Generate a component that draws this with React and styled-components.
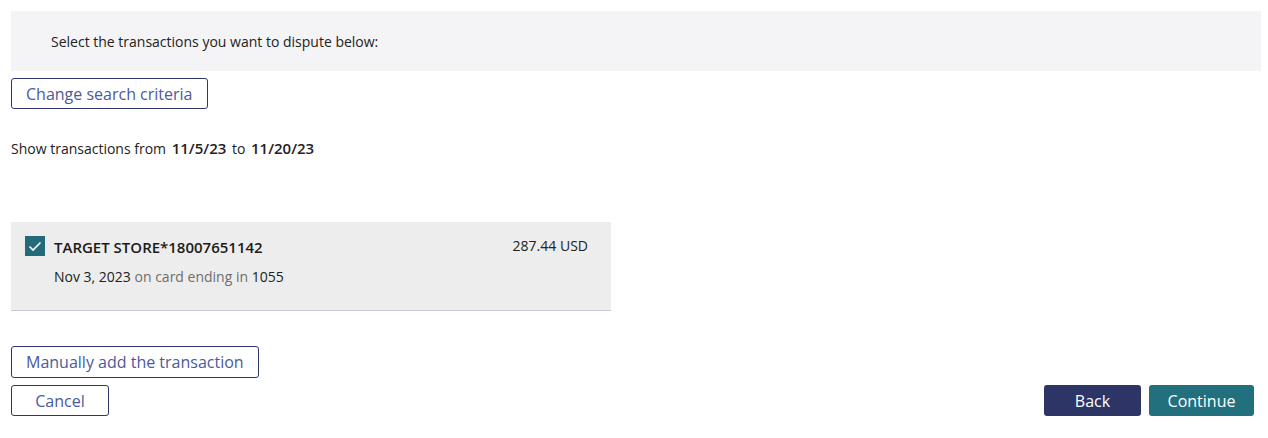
import styled, { createGlobalStyle } from 'styled-components'

const Global = createGlobalStyle`
    body {
        margin: 0;
        font-family: "Open Sans", "Noto Sans", sans-serif;
        color: #1a1a1a;
        background: #fff;
    }
`

const Page = styled.div`
    padding: 11px 7px 0 11px;
`

const Banner = styled.div`
    background: #f4f4f6;
    height: 60px;
    display: flex;
    align-items: center;
    padding-left: 40px;
    font-size: 14px;
    color: #222;
`

const OutlineButton = styled.button`
    font-family: inherit;
    font-size: 16px;
    color: #4b5a9c;
    background: #fff;
    border: 1px solid #2e3567;
    border-radius: 3px;
    height: ${p => p.$h || 31}px;
    padding: 0 14px;
    min-width: ${p => p.$w || 0}px;
    cursor: pointer;
`

const FillButton = styled.button`
    font-family: inherit;
    font-size: 16px;
    color: #fff;
    background: ${p => p.$bg};
    border: none;
    border-radius: 3px;
    height: 31px;
    width: ${p => p.$w}px;
    cursor: pointer;
`

const Range = styled.div`
    margin-top: 29px;
    font-size: 14px;
    color: #222;

    b {
        font-weight: 600;
        font-size: 15px;
        margin: 0 2px;
    }
`

const Card = styled.div`
    margin-top: 64px;
    width: 600px;
    height: 89px;
    box-sizing: border-box;
    background: #ededed;
    border-bottom: 1px solid #c5c7d6;
    padding: 14px 23px 0 14px;
    display: flex;
    gap: 9px;
`

const Check = styled.div`
    width: 20px;
    height: 20px;
    background: #236b78;
    display: flex;
    align-items: center;
    justify-content: center;
    flex-shrink: 0;
`

const Body = styled.div`
    flex: 1;
`

const TopLine = styled.div`
    display: flex;
    justify-content: space-between;
    align-items: flex-start;
`

const Merchant = styled.div`
    font-size: 15px;
    font-weight: 600;
    color: #1b1b1b;
    line-height: 22px;
`

const Amount = styled.div`
    font-size: 14px;
    color: #222;
    line-height: 20px;
`

const SubLine = styled.div`
    margin-top: 9px;
    font-size: 14px;
    color: #222;

    span {
        color: #6e6e6e;
    }
`

const Footer = styled.div`
    margin-top: 35px;
    display: flex;
    justify-content: space-between;
    align-items: flex-end;
    padding-right: 7px;
`

const Stack = styled.div`
    display: flex;
    flex-direction: column;
    align-items: flex-start;
    gap: 7px;
`

const Row = styled.div`
    display: flex;
    gap: 8px;
`

export default function App() {
    return (
        <Page>
            <Global />
            <Banner>Select the transactions you want to dispute below:</Banner>
            <OutlineButton style={{ marginTop: 7 }}>Change search criteria</OutlineButton>
            <Range>
                Show transactions from <b>11/5/23</b> to <b>11/20/23</b>
            </Range>
            <Card>
                <Check>
                    <svg width="14" height="11" viewBox="0 0 14 11">
                        <path d="M1.5 5.5 L5 9 L12.5 1.5" fill="none" stroke="#fff" strokeWidth="1.6" />
                    </svg>
                </Check>
                <Body>
                    <TopLine>
                        <Merchant>TARGET STORE*18007651142</Merchant>
                        <Amount>287.44 USD</Amount>
                    </TopLine>
                    <SubLine>
                        Nov 3, 2023 <span>on card ending in</span> 1055
                    </SubLine>
                </Body>
            </Card>
            <Footer>
                <Stack>
                    <OutlineButton $h={32}>Manually add the transaction</OutlineButton>
                    <OutlineButton $w={98}>Cancel</OutlineButton>
                </Stack>
                <Row>
                    <FillButton $bg="#2d3566" $w={97}>Back</FillButton>
                    <FillButton $bg="#22707d" $w={105}>Continue</FillButton>
                </Row>
            </Footer>
        </Page>
    )
}
